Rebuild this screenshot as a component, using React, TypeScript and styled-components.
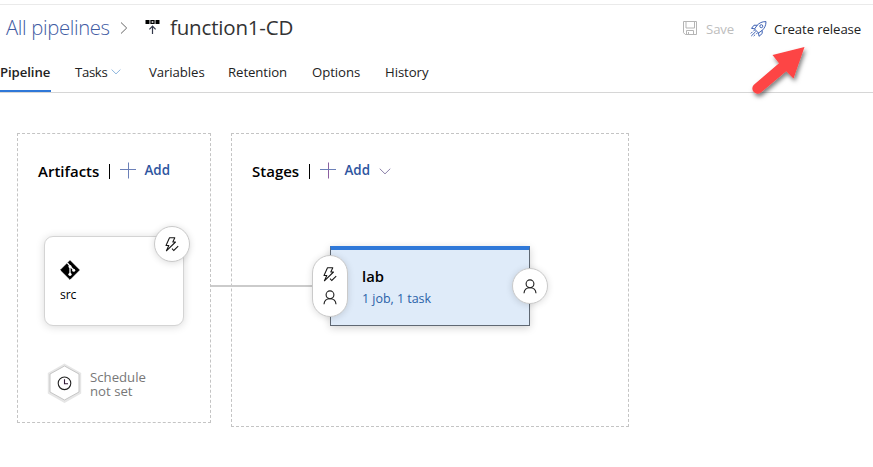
import React from 'react';
import styled, { createGlobalStyle } from 'styled-components';

const GlobalStyle = createGlobalStyle`
  * { box-sizing: border-box; }
  body {
    margin: 0;
    background: #fff;
    color: #222;
    font-family: "Open Sans", "Noto Sans", sans-serif;
    font-size: 13.2px;
    overflow: hidden;
  }
  svg { display: block; flex: none; overflow: visible; }
`;

const Page = styled.div`
  width: 873px;
  height: 467px;
  padding-top: 4px;
`;

const Header = styled.header`
  height: 89px;
  border-top: 1px solid #eaeaea;
  border-bottom: 1px solid #d6d6d6;
`;

const TitleRow = styled.div`
  display: flex;
  align-items: center;
  height: 46px;
  padding-left: 6px;
`;

const Crumb = styled.a`
  width: 114px;
  padding-bottom: 2px;
  font-size: 20.3px;
  font-weight: 300;
  letter-spacing: -0.35px;
  color: #3f5ca3;
  white-space: nowrap;
`;

const Title = styled.h1`
  margin: 0 0 0 10px;
  width: 490px;
  padding-bottom: 2px;
  font-size: 20.5px;
  font-weight: 400;
  letter-spacing: -0.18px;
  color: #333;
`;

const PipelineIconSlot = styled.span`
  margin-left: 17px;
  padding-bottom: 2px;
`;

const Command = styled.button<{ $disabled?: boolean; $width: number }>`
  display: flex;
  align-items: center;
  gap: ${(p) => (p.$disabled ? 9 : 7)}px;
  width: ${(p) => p.$width}px;
  flex: none;
  padding: 1px 0 0;
  border: 0;
  background: none;
  font: inherit;
  letter-spacing: -0.1px;
  white-space: nowrap;
  color: ${(p) => (p.$disabled ? '#bdbdbd' : '#222')};
`;

const Commands = styled.div`
  display: flex;
  gap: 15px;
  margin-left: auto;
  padding-right: 11px;
`;

const Tabs = styled.nav`
  display: flex;
  gap: 24px;
  height: 41px;
`;

const Tab = styled.a<{ $active?: boolean; $width: number }>`
  display: flex;
  align-items: center;
  gap: 4px;
  width: ${(p) => p.$width}px;
  padding-top: ${(p) => (p.$active ? 2 : 0)}px;
  border-bottom: ${(p) => (p.$active ? '2px solid #2f78d8' : '0')};
  font-weight: ${(p) => (p.$active ? 600 : 400)};
  letter-spacing: -0.08px;
  white-space: nowrap;
`;

const TabLabel = styled.span`
  letter-spacing: -0.35px;
`;

const Canvas = styled.main`
  display: flex;
  align-items: flex-start;
  gap: 20px;
  padding: 40px 0 0 17px;
`;

const Panel = styled.section<{ $width: number; $height: number }>`
  position: relative;
  width: ${(p) => p.$width}px;
  height: ${(p) => p.$height}px;
  padding: 26px 0 0 20px;
  border: 1px dashed #c4c4c4;
`;

const PanelHead = styled.div`
  display: flex;
  align-items: center;
  height: 22px;
`;

const PanelTitle = styled.h2<{ $width: number }>`
  margin: 0;
  width: ${(p) => p.$width}px;
  font-size: 15px;
  font-weight: 600;
  white-space: nowrap;
  color: #000;
`;

const Rule = styled.span`
  width: 1px;
  height: 15px;
  margin: 0 10px;
  background: #000;
`;

const AddButton = styled.button`
  display: flex;
  align-items: center;
  padding: 0;
  gap: 8px;
  border: 0;
  background: none;
  font: inherit;
  font-weight: 600;
  color: #2e55a0;
`;

const AddLabel = styled.span`
  width: 27px;
  padding: 0 0 3px 0.5px;
  text-align: left;
  font-size: 13.4px;
`;

const ArtifactCard = styled.article`
  position: relative;
  width: 140px;
  height: 90px;
  margin: 54px 0 0 6px;
  padding: 23px 0 0 15px;
  border: 1px solid #d4d4d4;
  border-radius: 9px;
  background: #fff;
  box-shadow: 0 1px 8px rgba(0, 0, 0, 0.15);
`;

const ArtifactName = styled.div`
  margin-top: 6px;
  font-size: 12.2px;
  line-height: 18px;
  letter-spacing: -0.1px;
  color: #000;
`;

const Badge = styled.div<{ $left: number; $top: number; $height?: number }>`
  position: absolute;
  left: ${(p) => p.$left}px;
  top: ${(p) => p.$top}px;
  display: flex;
  flex-direction: column;
  align-items: center;
  justify-content: center;
  gap: 8px;
  width: 36px;
  height: ${(p) => p.$height ?? 36}px;
  border: 1px solid #cacaca;
  border-radius: 18px;
  background: #fff;
  box-shadow: 0 1px 7px rgba(0, 0, 0, 0.14);
`;

const Schedule = styled.div`
  display: flex;
  align-items: center;
  gap: 8px;
  margin: 37px 0 0 9px;
  line-height: 14px;
  color: #777;
`;

const ScheduleText = styled.span`
  padding-top: 2px;
`;

const StageCard = styled.article`
  position: relative;
  width: 200px;
  height: 80px;
  margin: 64px 0 0 78px;
  padding: 16px 0 0 31px;
  border: 1px solid #5f6873;
  border-top: 4px solid #2f78d8;
  background: #dfebf9;
  box-shadow: 0 2px 8px rgba(0, 0, 0, 0.18);
`;

const StageName = styled.div`
  font-size: 14.8px;
  line-height: 20px;
  font-weight: 600;
  color: #000;
`;

const StageInfo = styled.div`
  margin-top: 4px;
  font-size: 12.5px;
  line-height: 18px;
  letter-spacing: -0.04px;
  color: #2a62a8;
`;

const Connector = styled.span`
  position: absolute;
  left: -21px;
  top: 151px;
  width: 103px;
  height: 2px;
  background: #cbcbcb;
`;

const ArrowOverlay = styled.svg`
  position: absolute;
  left: 745px;
  top: 40px;
`;

const Chevron = ({ color, width = 12 }: { color: string; width?: number }) => (
  <svg width={width} height={width * 0.58} viewBox="0 0 12 7" fill="none" stroke={color}>
    <path d="M.7.7 6 5.9 11.3.7" />
  </svg>
);

const CrumbChevron = () => (
  <svg width="8" height="12" viewBox="0 0 8 12" fill="none" stroke="#666">
    <path d="M1 .5 6.7 6 1 11.5" />
  </svg>
);

const Plus = ({ vertical }: { vertical: string }) => (
  <svg width="16" height="16" viewBox="0 0 16 16" fill="none">
    <path d="M8.5-.5v16" stroke={vertical} />
    <path d="M0 6.5h16" stroke="#6b80b8" />
  </svg>
);

const PipelineIcon = () => (
  <svg width="15" height="15" viewBox="0 0 15 15" fill="none">
    <path d="M.5 0h4v4h-4zM10.5 0h4v4h-4z" fill="#000" />
    <path d="M6 .7h3v2.7H6z" stroke="#000" strokeWidth="1.3" />
    <path d="M7.5 14V6.2M4.4 9.3l3.1-3.2 3.1 3.2" stroke="#34394a" strokeWidth="1.2" />
  </svg>
);

const SaveIcon = () => (
  <svg width="15" height="15" viewBox="0 0 15 15" fill="none" stroke="#b5b5b5">
    <path d="M1.500.5h13v13H3.300l-1.800-1.800zM4 1v6h8.500V1M4.500 13.500v-4h7v4M6.500 11v2.500" />
  </svg>
);

const RocketIcon = () => (
  <svg width="17" height="16" viewBox="0 0 17 16" fill="none" stroke="#3f63b5" strokeWidth="1">
    <path d="M16 .6C12 .5 9.2 2 7 4.5L4.5 8l4 4L12 9.5c2.5-2.2 4-5 4-8.9z" />
    <path d="M7.2 4.3 4 4.2 1.5 7.4l3.2.4M12.2 9.2v3.3L9 15.3l-.5-3.4" />
    <circle cx="11.3" cy="5.2" r="1.5" />
    <path d="M4.8 8.8 3.3 10.3M7.6 11.7 6.2 13.2M5.8 10.5 1.2 15.1M2.3 11 .8 12.5M5 13.8l-1.3 1.3" />
  </svg>
);

const GitIcon = () => (
  <svg width="20" height="20" viewBox="0 0 20 20">
    <path d="M10 .7 19.3 10 10 19.3.7 10z" fill="#000" stroke="#000" strokeLinejoin="round" />
    <path d="M7.3 2.8 10 6v8.5M10 6.2l4 4" fill="none" stroke="#fff" strokeWidth="1.3" />
    <circle cx="10" cy="6.5" r="1.5" fill="#fff" />
    <circle cx="10" cy="14.3" r="1.6" fill="#fff" />
    <circle cx="13.7" cy="10.3" r="1.5" fill="#fff" />
  </svg>
);

const TriggerIcon = () => (
  <svg width="14" height="15" viewBox="0 0 14 15" fill="none" stroke="#161616" strokeWidth="1.05">
    <path d="M4.500.7h5.300L7.800 5h2.700L1.400 13.800 3.800 8.500H1z" strokeLinejoin="round" />
    <path d="M7 11.700l1.800 1.800L13.200 9.200" />
  </svg>
);

const PersonIcon = () => (
  <svg width="14" height="15" viewBox="0 0 14 15" fill="none" stroke="#222" strokeWidth="1.15">
    <circle cx="7" cy="4.8" r="3.9" />
    <path d="M1 14.300c.2-3.500 2.700-5.600 6-5.600s5.800 2.100 6 5.600" />
  </svg>
);

const ScheduleIcon = () => (
  <svg width="35" height="40" viewBox="0 0 35 40" fill="none">
    <path d="M17.5 2.200 32.700 10.800v18.900L17.5 38.300 2.300 29.700V10.800z" stroke="#e6e6e6" strokeWidth="3" />
    <path d="M17.5 3 32 11v18L17.5 37 3 29V11z" fill="#fff" stroke="#c6c6c6" />
    <circle cx="17.5" cy="20.3" r="6.3" stroke="#222" strokeWidth="1.1" />
    <path d="M17.5 16.3v4.500H21" stroke="#321837" strokeWidth="1.1" />
  </svg>
);

const PointerArrow = () => (
  <ArrowOverlay width="70" height="65" viewBox="0 0 70 65">
    <defs>
      <filter id="arrow-shadow" x="-20%" y="-20%" width="150%" height="150%">
        <feDropShadow dx="1.5" dy="3" stdDeviation="2" floodColor="#000" floodOpacity=".5" />
      </filter>
    </defs>
    <path
      d="M59.500 7 27.500 15l6.500 8.300L9.200 44.500a5.200 5.200 0 0 0 6.700 8L41.200 31.300l7.300 7.200z"
      fill="#fd4444"
      filter="url(#arrow-shadow)"
    />
  </ArrowOverlay>
);

export default function App() {
  return (
    <Page>
      <GlobalStyle />
      <Header>
        <TitleRow>
          <Crumb>All pipelines</Crumb>
          <CrumbChevron />
          <PipelineIconSlot><PipelineIcon /></PipelineIconSlot>
          <Title>function1-CD</Title>
          <Commands>
            <Command $disabled $width={53}><SaveIcon />Save</Command>
            <Command $width={112}><RocketIcon />Create release</Command>
          </Commands>
        </TitleRow>
        <Tabs>
          <Tab $active $width={51}>Pipeline</Tab>
          <Tab $width={50}><TabLabel>Tasks</TabLabel><Chevron color="#75a6d6" width={10} /></Tab>
          <Tab $width={55}>Variables</Tab>
          <Tab $width={60}>Retention</Tab>
          <Tab $width={49}>Options</Tab>
          <Tab $width={44}>History</Tab>
        </Tabs>
      </Header>
      <Canvas>
        <Panel $width={194} $height={290}>
          <PanelHead>
            <PanelTitle $width={61}>Artifacts</PanelTitle>
            <Rule />
            <AddButton><Plus vertical="#6b80b8" /><AddLabel>Add</AddLabel></AddButton>
          </PanelHead>
          <ArtifactCard>
            <GitIcon />
            <ArtifactName>src</ArtifactName>
            <Badge $left={109} $top={-11}><TriggerIcon /></Badge>
          </ArtifactCard>
          <Schedule>
            <ScheduleIcon />
            <ScheduleText>Schedule<br />not set</ScheduleText>
          </Schedule>
        </Panel>
        <Panel $width={398} $height={294}>
          <PanelHead>
            <PanelTitle $width={47}>Stages</PanelTitle>
            <Rule />
            <AddButton><Plus vertical="#8b5fa0" /><AddLabel>Add</AddLabel><Chevron color="#8a7fa8" /></AddButton>
          </PanelHead>
          <Connector />
          <StageCard>
            <StageName>lab</StageName>
            <StageInfo>1 job, 1 task</StageInfo>
            <Badge $left={-19} $top={5} $height={62}><TriggerIcon /><PersonIcon /></Badge>
            <Badge $left={181} $top={18}><PersonIcon /></Badge>
          </StageCard>
        </Panel>
      </Canvas>
      <PointerArrow />
    </Page>
  );
}
